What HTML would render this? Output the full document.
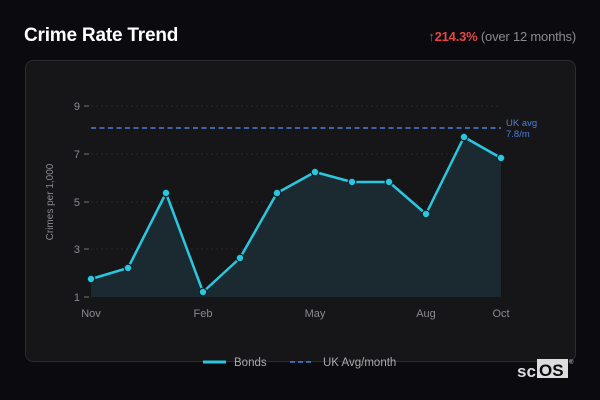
<!DOCTYPE html>
<html><head><style>
body{margin:0;width:600px;height:400px;background:#0b0a0e;font-family:"Liberation Sans","DejaVu Sans",sans-serif;overflow:hidden;position:relative}
.t{position:absolute;left:24px;top:25px;color:#fff;font-weight:bold;font-size:19px;letter-spacing:-0.2px}
.r{position:absolute;right:24px;top:29px;font-size:13px;color:#8a8a90;letter-spacing:-0.2px}
.r b{color:#e04848}
.card{position:absolute;left:25px;top:60px;width:549px;height:300px;background:#161619;border:1px solid #2c2c30;border-radius:8px}
</style></head><body>
<div class="t">Crime Rate Trend</div>
<div class="r"><b>↑214.3%</b> (over 12 months)</div>
<div class="card"></div>
<svg width="600" height="400" style="position:absolute;left:0;top:0" font-family="Liberation Sans,sans-serif">
<g stroke="#2a2a2e" stroke-dasharray="2 3" stroke-width="1">
<line x1="91" y1="106" x2="501" y2="106"/><line x1="91" y1="154" x2="501" y2="154"/><line x1="91" y1="202" x2="501" y2="202"/><line x1="91" y1="249" x2="501" y2="249"/></g>
<g fill="#8a8a90" font-size="11" text-anchor="end">
<text x="80" y="110">9</text><text x="80" y="158">7</text><text x="80" y="206">5</text><text x="80" y="253">3</text><text x="80" y="301">1</text></g>
<g stroke="#777" stroke-width="1"><line x1="84" y1="106" x2="89" y2="106"/><line x1="84" y1="154" x2="89" y2="154"/><line x1="84" y1="202" x2="89" y2="202"/><line x1="84" y1="249" x2="89" y2="249"/><line x1="84" y1="297" x2="89" y2="297"/></g>
<text transform="translate(53,202) rotate(-90)" fill="#8a8a90" font-size="10" text-anchor="middle">Crimes per 1,000</text>
<g fill="#8a8a90" font-size="11" text-anchor="middle">
<text x="91" y="317">Nov</text><text x="203" y="317">Feb</text><text x="315" y="317">May</text><text x="426" y="317">Aug</text><text x="501" y="317">Oct</text></g>
<path d="M91,279 L128,268 L166,193 L203,292 L240,258 L277,193 L315,172 L352,182 L389,182 L426,214 L464,137 L501,158 L501,297 L91,297Z" fill="#1a2a30"/>
<line x1="91" y1="128" x2="501" y2="128" stroke="#4a7fd8" stroke-width="1.6" stroke-dasharray="5 3.5"/>
<text x="506" y="126" fill="#4a7fd8" font-size="9.5">UK avg</text><text x="506" y="137" fill="#4a7fd8" font-size="9.5">7.8/m</text>
<polyline points="91,279 128,268 166,193 203,292 240,258 277,193 315,172 352,182 389,182 426,214 464,137 501,158" fill="none" stroke="#2ac8e0" stroke-width="2.5" stroke-linejoin="round"/>
<g fill="#2ac8e0" stroke="#0f1f24" stroke-width="1.2">
<circle cx="91" cy="279" r="3.8"/><circle cx="128" cy="268" r="3.8"/><circle cx="166" cy="193" r="3.8"/><circle cx="203" cy="292" r="3.8"/><circle cx="240" cy="258" r="3.8"/><circle cx="277" cy="193" r="3.8"/><circle cx="315" cy="172" r="3.8"/><circle cx="352" cy="182" r="3.8"/><circle cx="389" cy="182" r="3.8"/><circle cx="426" cy="214" r="3.8"/><circle cx="464" cy="137" r="3.8"/><circle cx="501" cy="158" r="3.8"/></g>
<line x1="203" y1="362" x2="226" y2="362" stroke="#2ac8e0" stroke-width="3"/>
<text x="234" y="366" fill="#aaa" font-size="11.5">Bonds</text>
<line x1="290" y1="362" x2="314" y2="362" stroke="#4a7fd8" stroke-width="1.6" stroke-dasharray="5 3"/>
<text x="323" y="366" fill="#aaa" font-size="11.5">UK Avg/month</text>
<text x="517" y="377" fill="#ddd" font-size="17" font-weight="bold">sc</text>
<rect x="537" y="359" width="31" height="19" fill="#ddd"/>
<text x="539" y="376" fill="#0b0a0e" font-size="17" font-weight="bold">OS</text>
<text x="569" y="364" fill="#ccc" font-size="6">®</text>
</svg>
</body></html>
